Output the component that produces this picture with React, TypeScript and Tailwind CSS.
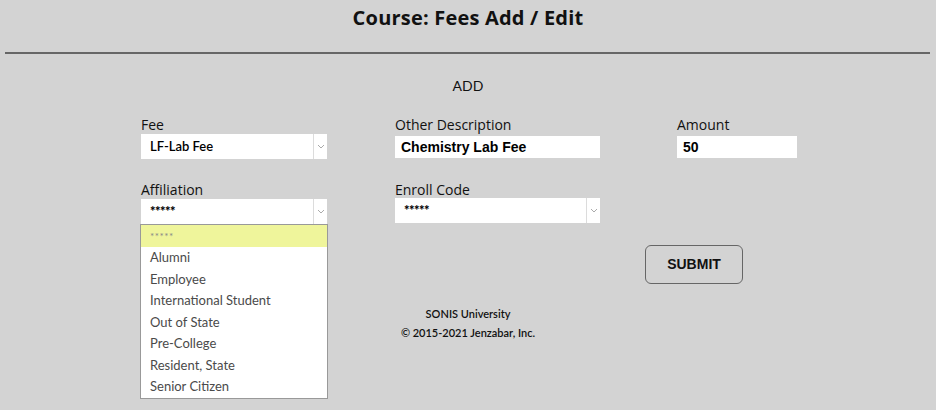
import React from 'react';

const geo = { fontFamily: 'Lato, "Open Sans", sans-serif' };
const arial = { fontFamily: '"Liberation Sans", Arial, sans-serif' };

const affiliations = [
  'Alumni',
  'Employee',
  'International Student',
  'Out of State',
  'Pre-College',
  'Resident, State',
  'Senior Citizen',
];

function Chevron() {
  return (
    <svg width="8" height="5" viewBox="0 0 8 5" className="text-[#aaa]">
      <path d="M1 1l3 3 3-3" fill="none" stroke="currentColor" strokeWidth="1" />
    </svg>
  );
}

function SelectBox({ value, width, dots }: { value: string; width: string; dots?: boolean }) {
  return (
    <div className={`flex h-[25px] bg-white ${width}`}>
      <div
        className={`flex flex-1 items-center pl-[9px] text-[13px] text-black ${dots ? 'font-black tracking-[-0.5px]' : 'font-semibold'}`}
        style={geo}
      >
        {value}
      </div>
      <div className="flex w-[14px] items-center justify-center border-l border-[#dcdcdc]">
        <Chevron />
      </div>
    </div>
  );
}

function Label({ children }: { children: React.ReactNode }) {
  return (
    <div className="h-[17px] text-[14px] leading-[17px] text-[#111]" style={{ fontFamily: '"Open Sans", sans-serif' }}>
      {children}
    </div>
  );
}

export default function App() {
  return (
    <div className="min-h-[410px] w-full bg-[#d3d3d3]">
      {/* Header */}
      <div className="h-[52px] pt-[4px] text-center">
        <h1
          className="text-[20px] font-bold leading-[28px] tracking-[0.2px] text-[#111]"
          style={{ fontFamily: '"Open Sans", sans-serif' }}
        >
          Course: Fees Add / Edit
        </h1>
      </div>
      <div className="ml-[5px] mr-[6px] h-[2px] bg-[#666]" />

      <div className="mt-[22px] text-center text-[14px] leading-[20px] text-[#111]" style={geo}>
        ADD
      </div>

      {/* Form */}
      <div className="mt-[20px] pl-[141px]">
        <div className="grid grid-cols-[254px_282px_140px]">
          <div>
            <Label>Fee</Label>
            <div className="mt-px">
              <SelectBox value="LF-Lab Fee" width="w-[186px]" />
            </div>
          </div>
          <div>
            <Label>Other Description</Label>
            <div
              className="mt-[3px] flex h-[22px] w-[205px] items-center bg-white pl-[6px] text-[14px] font-bold text-black"
              style={arial}
            >
              Chemistry Lab Fee
            </div>
          </div>
          <div>
            <Label>Amount</Label>
            <div
              className="mt-[3px] flex h-[22px] w-[120px] items-center bg-white pl-[6px] text-[14px] font-bold text-black"
              style={arial}
            >
              50
            </div>
          </div>
        </div>

        <div className="mt-[22px] grid grid-cols-[254px_282px_140px]">
          <div>
            <Label>Affiliation</Label>
            <div className="relative mt-px">
              <SelectBox value="*****" width="w-[186px]" dots />
              {/* Open dropdown list */}
              <div className="absolute left-[-1px] top-full z-10 w-[188px] border border-[#999] bg-white" style={geo}>
                <div className="flex h-[22px] items-center bg-[#eff59b] pl-[9px] text-[10px] tracking-[0.5px] text-[#888]">
                  *****
                </div>
                {affiliations.map((a) => (
                  <div key={a} className="h-[21.5px] pl-[9px] text-[13px] leading-[21.5px] text-[#4a4a4a]">
                    {a}
                  </div>
                ))}
              </div>
            </div>
          </div>
          <div>
            <Label>Enroll Code</Label>
            <div className="mt-0">
              <SelectBox value="*****" width="w-[205px]" dots />
            </div>
          </div>
          <div />
        </div>

        <div className="mt-[21px] pl-[504px]">
          <button
            className="h-[39px] w-[98px] rounded-[6px] border border-[#666] bg-transparent text-[14px] font-bold text-[#111]"
            style={arial}
          >
            SUBMIT
          </button>
        </div>
      </div>

      {/* Footer */}
      <div className="mt-[20px] text-center text-[11px] font-semibold leading-[19px] text-[#111]" style={geo}>
        <div>SONIS University</div>
        <div>© 2015-2021 Jenzabar, Inc.</div>
      </div>
    </div>
  );
}
